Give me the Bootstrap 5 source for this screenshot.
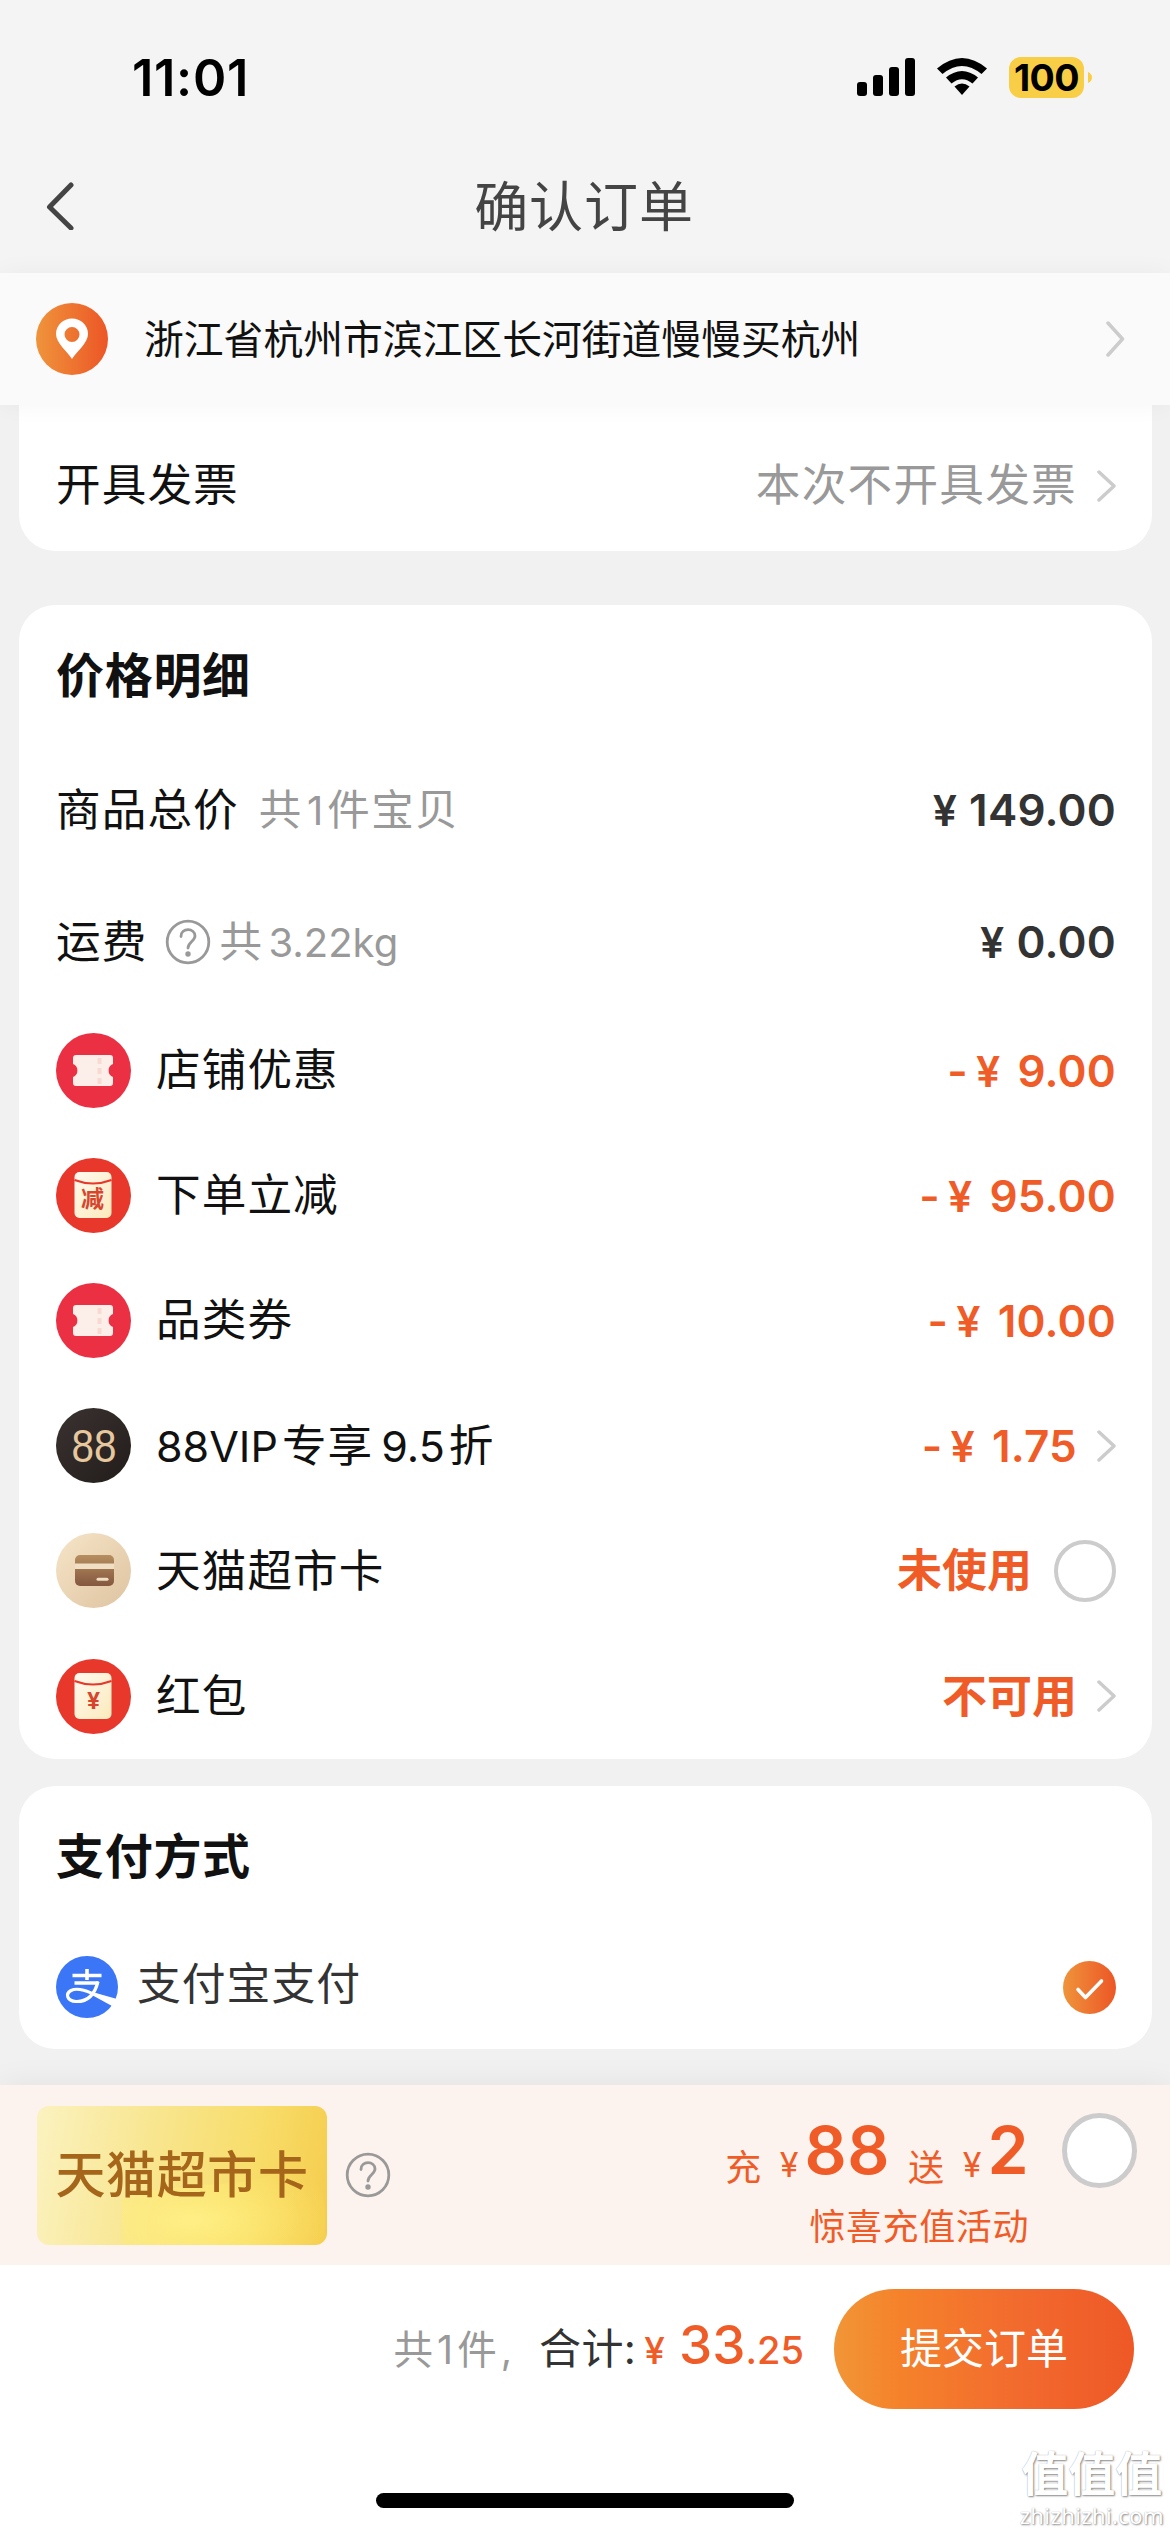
<!DOCTYPE html>
<html lang="zh-CN">
<head>
<meta charset="utf-8">
<meta name="viewport" content="width=device-width, initial-scale=1">
<title>确认订单</title>
<link href="https://cdn.jsdelivr.net/npm/bootstrap@5.3.0/dist/css/bootstrap.min.css" rel="stylesheet">
<style>
  body { background:#f1f1f1; color:#111; font-family:Inter,"Noto Sans CJK SC",sans-serif; font-size:44px; line-height:1; width:1170px; height:2532px; overflow:hidden; }
  svg { display:block; flex:none; }
  .top-area { background:#f4f4f4; height:273px; }
  .status { height:136px; padding:57px 78px 0 132px; }
  .clock { font-size:50.500px; font-weight:600; line-height:41px; letter-spacing:.7px; }
  .status-icons { height:41px; }
  .battery { width:75px; height:41px; border-radius:12px; background:#f8ce46; color:#000; font-size:37.500px; font-weight:700; line-height:41px; letter-spacing:-.6px; }
  .titlebar { height:137px; padding:0 42px; }
  .titlebar h1 { font-size:54px; font-weight:400; color:#444; line-height:60px; margin:6px 0 0; letter-spacing:.9px; }
  .title-side { width:42px; }
  .address { background:#fafafa; height:132px; padding:0 45px 0 36px; font-size:39.800px; box-shadow:0 0 24px rgba(0,0,0,.045); }
  .addr-name { padding:2px 0 0 36px; white-space:nowrap; }
  .panel { margin:0 18px 0 19px; background:#fff; padding:0 36px 0 37px; }
  .panel-invoice { height:146px; border-radius:0 0 36px 36px; padding-top:15px; }
  .panel-invoice .hint { font-size:44.600px; letter-spacing:1.3px; }
  .panel-price { height:1154px; margin-top:54px; border-radius:36px; padding-top:2px; }
  .panel-pay { height:263px; margin-top:27px; border-radius:36px; }
  .label-text { font-size:44.600px; letter-spacing:1.100px; }
  .latin { font-size:43px; letter-spacing:0; }
  .heading { font-size:48px; font-weight:700; letter-spacing:.7px; }
  .hint { color:#999; font-size:42.500px; letter-spacing:1.600px; }
  .hint .latin { font-size:40px; letter-spacing:0; }
  .weight-num { padding-left:5px; }
  .arrow { margin-left:20px; }
  .row-title { height:137px; }
  .row-line { height:132px; }
  .row-icon { height:125.100px; }
  .row-icon .label-text { margin-left:25px; }
  .price { color:#333; font-size:44px; font-weight:600; letter-spacing:.2px; }
  .price .yen { font-size:43px; margin-right:12px; }
  .price .minus { margin-right:8px; }
  .price.hot .yen { margin-right:17px; }
  .price.hot, .hot { color:#f05c28; }
  .state { font-size:45px; font-weight:700; }
  .ring { width:62px; height:62px; border:4px solid #ccc; border-radius:50%; margin-left:22px; }
  .pay-title { height:138px; padding-top:3px; }
  .pay-row { height:126px; }
  .pay-name { color:#333; font-size:43.800px; letter-spacing:1px; margin-left:19px; padding-bottom:5px; }
  .promo { height:180px; margin-top:36px; background:#fdf3ee; padding:0 33px 0 37px; box-shadow:0 0 30px rgba(0,0,20,.07); }
  .gold { width:290px; height:139px; border-radius:12px; color:#a5651a; font-size:50px; font-weight:500; letter-spacing:.6px; background:linear-gradient(100deg,#fbf2c0 0%,#f8e690 38%,#f8dd6a 72%,#f5cc4c 100%); overflow:hidden; }
  .gold .glow { inset:0; }
  .offer { margin-right:33px; padding-top:12px; }
  .offer .small-t { font-size:36px; letter-spacing:.6px; }
  .offer-top .small-t { margin-bottom:-4px; }
  .offer-sub { margin-top:27px; }
  .small-y { font-size:34px; padding:0 6px 0 18px; }
  .send { margin-left:18px; }
  .big { font-size:66px; font-weight:600; line-height:64px; letter-spacing:.5px; }
  .ring-lg { width:75px; height:75px; border:5px solid #ccc; border-radius:50%; background:#fff; margin-bottom:49px; }
  .checkout { background:#fff; height:267px; }
  .bar { height:168px; padding:0 36px 0 0; }
  .total-a { color:#999; font-size:39.500px; }
  .comma { padding-left:4px; }
  .total-b { color:#333; font-size:42px; margin-left:27px; letter-spacing:.4px; }
  .total-c { font-size:53px; font-weight:500; line-height:46px; }
  .total-c .cents { font-size:38px; }
  .total-c .yen-s { font-size:37px; }
  .total-wrap { padding-bottom:3px; }
  .submit { width:300px; height:120px; border-radius:60px; background:linear-gradient(90deg,#f19637,#f5822b 22%,#f26a2e 62%,#ee5826); color:#fff; font-size:42px; border:0; padding:0; line-height:1; margin-left:30px; }
  .home { width:418px; height:15px; border-radius:8px; background:#000; left:376px; bottom:24px; }
  .wm { right:6px; bottom:6px; color:#fff; text-shadow:1px 1px 2px #888,0 0 1px #aaa; }
  .wm-a { font-size:47px; font-weight:700; line-height:48px; margin-bottom:6px; }
  .wm-b { font-family:"Noto Sans",sans-serif; font-size:22px; line-height:22px; letter-spacing:.4px; }
</style>
</head>
<body>
<header class="top-area">
  <div class="status d-flex justify-content-between">
    <div class="clock text-black">11:01</div>
    <div class="status-icons d-flex">
      <svg width="58" height="41" viewBox="0 0 58 41"><rect x="0" y="25" width="10" height="14" rx="3"/><rect x="16" y="18" width="10" height="21" rx="3"/><rect x="32" y="10" width="10" height="29" rx="3"/><rect x="48" y="1" width="10" height="38" rx="3"/></svg>
      <svg class="ms-4 me-4" width="46" height="41" viewBox="2 0 46 41" overflow="visible"><path d="M0 11.500Q25-9.500 50 11.500L44.500 17Q25 .800 5.500 17Z"/><path d="M9 20.500Q25 7.500 41 20.500L35.500 26.500Q25 17.800 14.500 26.500Z"/><path d="M17.500 29.500Q25 23.500 32.500 29.500L25 38Z"/></svg>
      <div class="battery d-flex justify-content-center">100</div>
      <svg class="ms-1" width="4" height="41"><path d="M0 15q4 2 4 5.500t-4 5.500z" fill="#f8ce46"/></svg>
    </div>
  </div>
  <div class="titlebar d-flex align-items-center justify-content-between">
    <svg width="40" height="50" viewBox="0 0 40 50" fill="none" stroke="#444" stroke-width="5" stroke-linecap="round" stroke-linejoin="round"><path d="M29 5 7.500 27 29 48"/></svg>
    <h1>确认订单</h1>
    <span class="title-side"></span>
  </div>
</header>

<section class="address position-relative d-flex align-items-center">
  <svg width="72" height="72" viewBox="0 0 72 72"><defs><linearGradient id="og"><stop stop-color="#ef943b"/><stop offset="1" stop-color="#ec5626"/></linearGradient></defs><circle cx="36" cy="36" r="36" fill="url(#og)"/><path fill="#fff" fill-rule="evenodd" d="M36 56C31 48 20 40 20 31a16 15.500 0 1 1 32 0c0 9-11 17-16 25ZM36 39a7.500 7.500 0 1 0 0-15 7.500 7.500 0 0 0 0 15Z"/></svg>
  <span class="flex-grow-1 addr-name">浙江省杭州市滨江区长河街道慢慢买杭州</span>
  <svg width="20" height="36" viewBox="0 0 20 36" fill="none" stroke="#ccc" stroke-width="3.500" stroke-linecap="round" stroke-linejoin="round"><path d="M3 2 17.500 18 3 34"/></svg>
</section>

<main>
  <section class="panel panel-invoice d-flex align-items-center justify-content-between">
    <span class="label-text">开具发票</span>
    <span class="d-flex align-items-center">
      <span class="hint">本次不开具发票</span>
      <svg class="arrow" width="19" height="34" viewBox="0 0 19 34" fill="none" stroke="#ccc" stroke-width="3.500" stroke-linecap="round" stroke-linejoin="round"><path d="M2 3 17 17 2 31"/></svg>
    </span>
  </section>

  <section class="panel panel-price">
    <div class="row-title d-flex align-items-center"><span class="heading">价格明细</span></div>
    <div class="row-line d-flex align-items-center justify-content-between">
      <span class="d-flex align-items-center"><span class="label-text">商品总价</span><span class="hint ms-3 ps-1">共<span class="latin px-1">1</span>件宝贝</span></span>
      <span class="price"><span class="yen">¥</span>149.00</span>
    </div>
    <div class="row-line d-flex align-items-center justify-content-between">
      <span class="d-flex align-items-center"><span class="label-text">运费</span>
        <svg class="ms-3 me-2" width="48" height="46" viewBox="-2 0 48 46" fill="none" stroke="#999" stroke-width="2.800" stroke-linecap="round"><circle cx="23" cy="23" r="20.800"/><path d="M16 17.500C16 8.500 30 8.500 30 17c0 5-7 6-7 12"/><circle cx="23" cy="35" r="1.300" fill="#999"/></svg>
        <span class="hint">共<span class="latin weight-num">3.22kg</span></span></span>
      <span class="price"><span class="yen">¥</span>0.00</span>
    </div>

    <div class="row-icon d-flex align-items-center justify-content-between">
      <span class="d-flex align-items-center">
        <svg width="75" height="75" viewBox="0 0 75 75"><circle cx="37.500" cy="37.500" r="37.500" fill="#ea3042"/><path id="ticket" fill="#fcefea" d="M20 22h34q3 0 3 3v6a7 7 0 0 0 0 13v6q0 3-3 3H20q-3 0-3-3v-6a7 7 0 0 0 0-13v-6q0-3 3-3Z"/><path d="M43.500 25v26" stroke="#f7dad2" stroke-width="4" stroke-dasharray="6 4"/></svg>
        <span class="label-text">店铺优惠</span></span>
      <span class="price hot"><span class="minus">-</span><span class="yen">¥</span>9.00</span>
    </div>
    <div class="row-icon d-flex align-items-center justify-content-between">
      <span class="d-flex align-items-center">
        <svg width="75" height="75" viewBox="0 0 75 75"><defs><linearGradient id="env" x1="0" y1="0" x2="1" y2="1"><stop stop-color="#fffaf0"/><stop offset="1" stop-color="#fbeabb"/></linearGradient></defs><circle cx="37.500" cy="37.500" r="37.500" fill="#e8372b"/><rect x="18.500" y="14" width="37" height="46" rx="5" fill="url(#env)"/><path d="M18.500 22q18.500 7 37 0" fill="none" stroke="#e8372b" stroke-width="2"/><text x="36.500" y="49" text-anchor="middle" font-size="23" font-weight="700" fill="#d8452f">减</text></svg>
        <span class="label-text">下单立减</span></span>
      <span class="price hot"><span class="minus">-</span><span class="yen">¥</span>95.00</span>
    </div>
    <div class="row-icon d-flex align-items-center justify-content-between">
      <span class="d-flex align-items-center">
        <svg width="75" height="75" viewBox="0 0 75 75"><circle cx="37.500" cy="37.500" r="37.500" fill="#ea3042"/><use href="#ticket"/><path d="M43.500 25v26" stroke="#f7dad2" stroke-width="4" stroke-dasharray="6 4"/></svg>
        <span class="label-text">品类券</span></span>
      <span class="price hot"><span class="minus">-</span><span class="yen">¥</span>10.00</span>
    </div>
    <div class="row-icon d-flex align-items-center justify-content-between">
      <span class="d-flex align-items-center">
        <svg width="75" height="75" viewBox="0 0 75 75"><defs><linearGradient id="dk" x1="0" y1="0" x2="1" y2="1"><stop stop-color="#3b3230"/><stop offset="1" stop-color="#211d1b"/></linearGradient></defs><circle cx="37.500" cy="37.500" r="37.500" fill="url(#dk)"/><text x="38" y="54" text-anchor="middle" textLength="45" font-family="Liberation Sans,sans-serif" font-size="46" lengthAdjust="spacingAndGlyphs" fill="#e7c79d">88</text></svg>
        <span class="label-text"><span class="latin">88VIP</span><span class="ps-1">专享</span><span class="latin ps-2 pe-1">9.5</span>折</span></span>
      <span class="d-flex align-items-center"><span class="price hot"><span class="minus">-</span><span class="yen">¥</span>1.75</span>
        <svg class="arrow" width="19" height="34" viewBox="0 0 19 34" fill="none" stroke="#ccc" stroke-width="3.500" stroke-linecap="round" stroke-linejoin="round"><path d="M2 3 17 17 2 31"/></svg></span>
    </div>
    <div class="row-icon d-flex align-items-center justify-content-between">
      <span class="d-flex align-items-center">
        <svg width="75" height="75" viewBox="0 0 75 75"><defs><linearGradient id="tan" x1="0" y1="0" x2="1" y2="1"><stop stop-color="#f6e5c8"/><stop offset="1" stop-color="#dec3a0"/></linearGradient><linearGradient id="brn" x1="0" y1="0" x2="0" y2="1"><stop stop-color="#b78e60"/><stop offset="1" stop-color="#84573f"/></linearGradient></defs><circle cx="37.500" cy="37.500" r="37.500" fill="url(#tan)"/><rect x="19" y="22" width="39" height="31" rx="5" fill="url(#brn)"/><path d="M19 33.200h39" stroke="#f0dfc4" stroke-width="5.500"/><path d="M42 46.200h9" stroke="#f0dfc4" stroke-width="3" stroke-linecap="round"/></svg>
        <span class="label-text">天猫超市卡</span></span>
      <span class="d-flex align-items-center"><span class="state hot">未使用</span><span class="ring"></span></span>
    </div>
    <div class="row-icon d-flex align-items-center justify-content-between">
      <span class="d-flex align-items-center">
        <svg width="75" height="75" viewBox="0 0 75 75"><circle cx="37.500" cy="37.500" r="37.500" fill="#e8372b"/><rect x="18.500" y="14" width="37" height="46" rx="5" fill="url(#env)"/><path d="M18.500 22q18.500 7 37 0" fill="none" stroke="#e8372b" stroke-width="2"/><text x="37.500" y="50" text-anchor="middle" font-size="23" font-weight="700" fill="#d8452f">¥</text></svg>
        <span class="label-text">红包</span></span>
      <span class="d-flex align-items-center"><span class="state hot">不可用</span>
        <svg class="arrow" width="19" height="34" viewBox="0 0 19 34" fill="none" stroke="#ccc" stroke-width="3.500" stroke-linecap="round" stroke-linejoin="round"><path d="M2 3 17 17 2 31"/></svg></span>
    </div>
  </section>

  <section class="panel panel-pay">
    <div class="pay-title d-flex align-items-center"><span class="heading">支付方式</span></div>
    <div class="pay-row d-flex align-items-center justify-content-between">
      <span class="d-flex align-items-center">
        <svg width="62" height="62" viewBox="0 0 62 62"><circle cx="31" cy="31" r="31" fill="#3a76f6"/><path d="M31 13v11M16.500 19.500h29M18.500 27h24" stroke="#fff" stroke-width="3.600" fill="none"/><path d="M42 25.500Q37 46 20 45.500C11 45 9 38 15 34.500 23 30.500 33 36 59 47" fill="none" stroke="#fff" stroke-width="3.200"/><path d="M38 36.500 61 43l-5 7L35 38.500Z" fill="#fff"/></svg>
        <span class="pay-name">支付宝支付</span></span>
      <svg width="53" height="53" viewBox="0 0 53 53"><circle cx="26.500" cy="26.500" r="26.500" fill="url(#og)"/><path d="m15 28.500 7.500 8L38.500 20" fill="none" stroke="#fff" stroke-width="3.600" stroke-linecap="round" stroke-linejoin="round"/></svg>
    </div>
  </section>
</main>

<section class="promo position-relative d-flex align-items-center">
  <div class="gold position-relative d-flex align-items-center justify-content-center">
    <svg class="glow position-absolute" width="290" height="139" viewBox="0 0 290 139"><defs><radialGradient id="gl" cx=".35" cy=".7" r=".75"><stop stop-color="#fff086" stop-opacity=".95"/><stop offset="1" stop-color="#ffe968" stop-opacity="0"/></radialGradient></defs><path d="M85 139V92C150 72 220 85 245 62c20-14 38-2 43 40v37Z" fill="url(#gl)"/></svg>
    <span class="position-relative">天猫超市卡</span>
  </div>
  <svg class="ms-3" width="48" height="46" viewBox="-1 0 48 46" fill="none" stroke="#999" stroke-width="2.800" stroke-linecap="round"><circle cx="24" cy="23" r="20.800"/><path d="M17 17.500C17 8.500 31 8.500 31 17c0 5-7 6-7 12"/><circle cx="24" cy="35" r="1.300" fill="#999"/></svg>
  <div class="offer hot ms-auto d-flex flex-column align-items-end">
    <div class="offer-top d-flex align-items-end">
      <span class="small-t">充</span><span class="small-y">¥</span><span class="big">88</span><span class="small-t send">送</span><span class="small-y">¥</span><span class="big">2</span>
    </div>
    <div class="small-t offer-sub">惊喜充值活动</div>
  </div>
  <span class="ring-lg"></span>
</section>

<footer class="checkout position-relative">
  <div class="bar d-flex align-items-center justify-content-end">
    <span class="total-wrap d-flex align-items-baseline">
      <span class="total-a">共<span class="px-1">1</span>件<span class="comma">,</span></span>
      <span class="total-b">合计:</span>
      <span class="total-c hot ms-2"><span class="yen-s">¥</span> 33<span class="cents">.25</span></span>
    </span>
    <button class="submit btn">提交订单</button>
  </div>
  <div class="home position-absolute"></div>
  <div class="wm position-absolute text-center"><div class="wm-a">值值值</div><div class="wm-b">zhizhizhi.com</div></div>
</footer>
<script src="https://cdn.jsdelivr.net/npm/bootstrap@5.3.0/dist/js/bootstrap.bundle.min.js"></script>
</body>
</html>
